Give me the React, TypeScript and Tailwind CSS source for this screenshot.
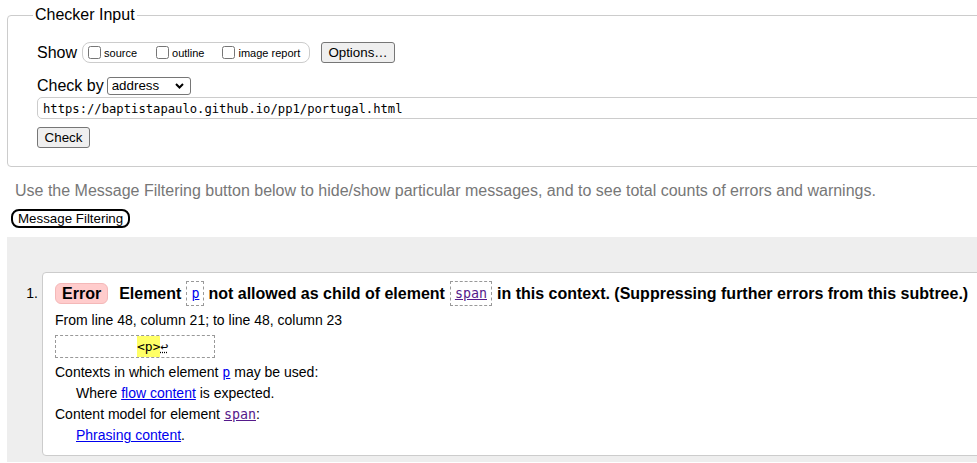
import { useState } from 'react';

const mono = "font-['DejaVu_Sans_Mono','Liberation_Mono',monospace]";

function Check({ label, className }: { label: string; className?: string }) {
  return (
    <label className={`flex items-center ${className ?? ''}`}>
      <input type="checkbox" className="m-0 h-[13px] w-[13px]" />
      <span className="ml-[3px] mt-[2px]">{label}</span>
    </label>
  );
}

function CodeBox({ children }: { children: React.ReactNode }) {
  return (
    <span className={`flex h-[25px] items-center border border-dashed border-[#999] px-[4px] font-normal ${mono} text-[13.33px]`}>
      {children}
    </span>
  );
}

export default function App() {
  const [url] = useState('https://baptistapaulo.github.io/pp1/portugal.html');

  return (
    <div className="h-[463px] w-[977px] overflow-hidden bg-white font-['Liberation_Sans',Arial,sans-serif] text-black">
      <div className="w-[1020px]">
        {/* Checker input */}
        <fieldset className="ml-[7px] mt-[6px] rounded-[4px] border border-[#ccc] pb-[17px] pl-[29px]">
          <legend className="-ml-[4px] px-[2px] text-[16px] leading-[18px]">Checker Input</legend>
          <div className="pt-[18px]">
            <div className="flex h-[21px] items-center">
              <span className="text-[16px]">Show</span>
              <div className="ml-[5px] flex h-[21px] w-[228px] items-center rounded-[8px] border border-[#ccc] pl-[5px] text-[11px]">
                <Check label="source" />
                <Check label="outline" className="ml-[19px]" />
                <Check label="image report" className="ml-[18px]" />
              </div>
              <button className="ml-[11px] h-[21px] w-[74px] rounded-[3px] border border-[#767676] bg-[#efefef] text-[13.33px]">
                Options…
              </button>
            </div>

            <div className="mt-[12px] flex h-[22px] items-center">
              <span className="text-[16px]">Check by</span>
              <div className="ml-[3px] flex h-[18px] w-[84px] items-center justify-between rounded-[3px] border border-[#767676] pl-[4px] pr-[6px] text-[13.33px]">
                <span>address</span>
                <svg width="9" height="6" viewBox="0 0 9 6">
                  <polyline points="1,1 4.5,4.5 8,1" fill="none" stroke="#000" strokeWidth="2" />
                </svg>
              </div>
            </div>

            <div className={`flex h-[22px] w-[990px] items-center rounded-[5px] border border-[#ccc] pl-[5px] pt-[2px] ${mono} text-[12.2px]`}>
              {url}
            </div>

            <button className="mt-[8px] h-[21px] w-[53px] rounded-[3px] border border-[#767676] bg-[#efefef] text-[13.33px]">
              Check
            </button>
          </div>
        </fieldset>

        <p className="ml-[15px] mt-[15px] text-[16px] leading-[18px] text-[#777]">
          Use the Message Filtering button below to hide/show particular messages, and to see total counts of errors and warnings.
        </p>

        <button className="ml-[11px] mt-[9px] flex h-[19px] items-center rounded-[8px] border-2 border-black bg-white px-[5px] text-[13.33px] leading-none">
          Message Filtering
        </button>

        {/* Results */}
        <div className="ml-[7px] mt-[9px] flex bg-[#eee] pb-[6px] pt-[35px]">
          <div className="w-[35px] pt-[9px]">
            <div className="flex h-[25px] items-center justify-end pr-[4px] text-[14px]">1.</div>
          </div>
          <div className="flex-1 rounded-[4px] border border-[#ccc] bg-white pb-[9px] pl-[12px] pt-[8px] text-[14px] leading-[21px]">
            <div className="flex h-[25px] items-center whitespace-nowrap text-[16px] font-bold">
              <span className="flex h-[21px] items-center rounded-[6px] border border-[#f4b8b8] bg-[#fcc] px-[6px]">Error</span>
              <span className="ml-[11px]">Element</span>
              <span className="ml-[5px]">
                <CodeBox>
                  <span className="text-[#0000ee] underline">p</span>
                </CodeBox>
              </span>
              <span className="ml-[4px]">not allowed as child of element</span>
              <span className="ml-[5px]">
                <CodeBox>
                  <span className="text-[#551a8b] underline">span</span>
                </CodeBox>
              </span>
              <span className="ml-[5px]">in this context. (Suppressing further errors from this subtree.)</span>
            </div>

            <p className="mt-[4px]">From line 48, column 21; to line 48, column 23</p>

            <div className={`mt-[4px] flex h-[23px] w-[160px] items-center border border-dashed border-[#999] pl-[81px] ${mono} text-[13px]`}>
              <span className="bg-[#ff6]">&lt;p&gt;</span>
              <span className="underline decoration-dotted">↩</span>
            </div>

            <p className="mt-[4px]">
              Contexts in which element{' '}
              <span className={`${mono} text-[13.33px] text-[#0000ee] underline`}>p</span> may be used:
            </p>
            <p className="pl-[21px]">
              Where <span className="text-[#0000ee] underline">flow content</span> is expected.
            </p>
            <p>
              Content model for element{' '}
              <span className={`${mono} text-[13.33px] text-[#551a8b] underline`}>span</span>:
            </p>
            <p className="pl-[21px]">
              <span className="text-[#0000ee] underline">Phrasing content</span>.
            </p>
          </div>
        </div>
      </div>
    </div>
  );
}
